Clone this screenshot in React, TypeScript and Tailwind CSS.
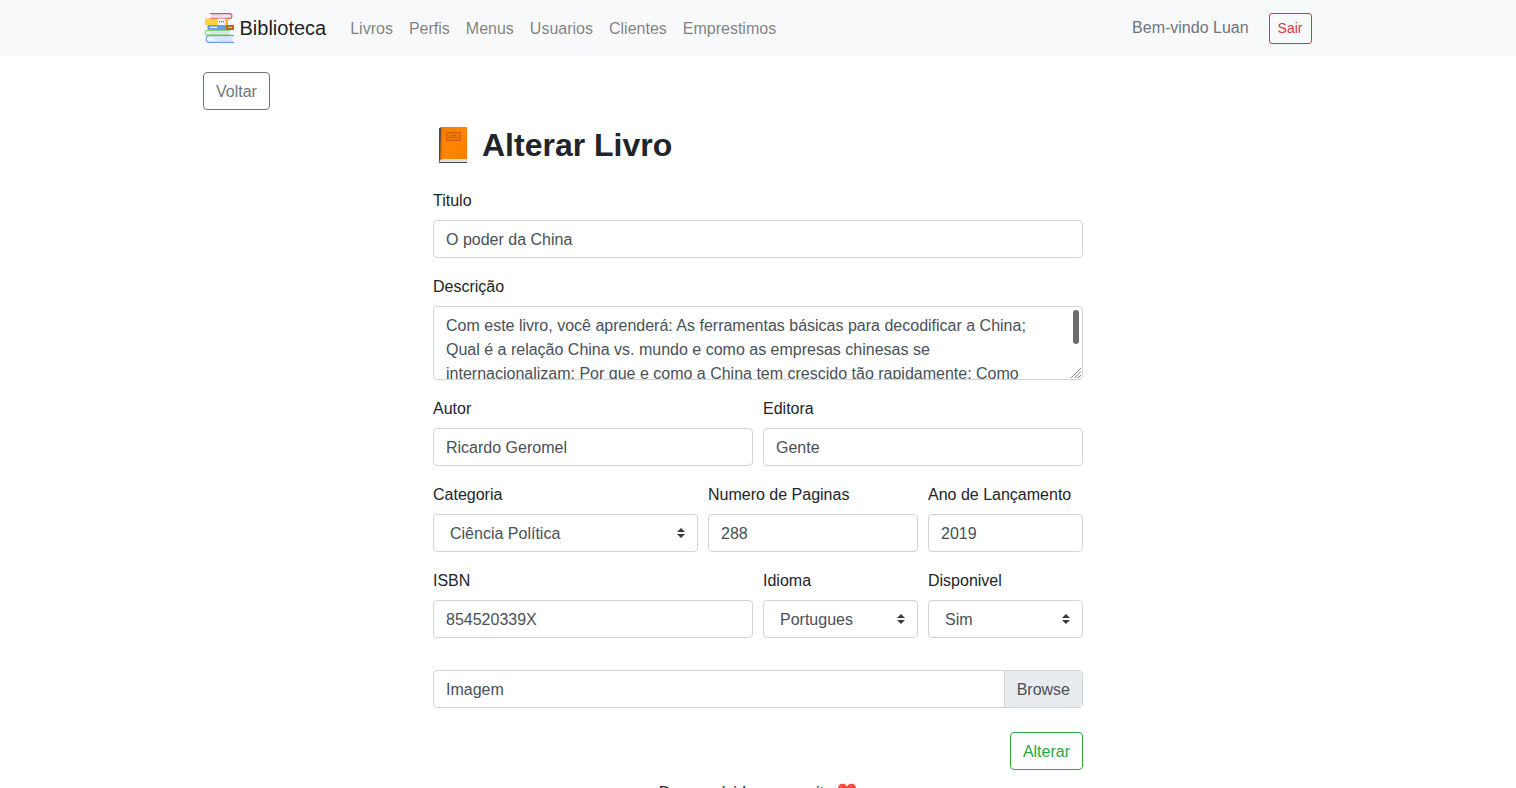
import { useState } from 'react';
import type { ReactNode, UIEvent } from 'react';

const links = ['Livros', 'Perfis', 'Menus', 'Usuarios', 'Clientes', 'Emprestimos'];

const control =
  'block h-[38px] w-full rounded border border-[#ced4da] bg-white px-3 pt-[7px] pb-[5px] text-base text-[#495057]';

const description =
  'Com este livro, você aprenderá: As ferramentas básicas para decodificar a China; Qual é a relação China vs. mundo e como as empresas chinesas se internacionalizam; Por que e como a China tem crescido tão rapidamente; Como aproveitar as oportunidades de negócios com os chineses; Quais são os avanços em tecnologia e inovação.';

function BooksLogo() {
  return (
    <svg viewBox="0 0 30 30" className="h-[30px] w-[30px]" fill="none" aria-hidden="true">
      <path d="M7 1h19v3.800H7z" fill="#e4eaf8" />
      <path d="M6 .6h19.500a2.400 2.400 0 0 1 0 4.800H6" stroke="#f3455f" strokeWidth="1.100" />
      <path d="M8 2.700h10" stroke="#c3d0ea" strokeWidth=".8" />
      <path d="M1 5.600h23V12H1z" fill="#ffd53e" />
      <path d="M22 5.600h2V12h-2z" fill="#f6b72c" />
      <path d="M14 5.600h7V12h-7z" fill="#f2f5fc" />
      <path d="M15 8.600h1m1 0h1m1 0h1" stroke="#59647c" strokeWidth="1.200" />
      <path d="M3.500 12H22v5H3.500z" fill="#6c9cf8" />
      <path d="M6 14.400h7" stroke="#fff" strokeWidth="1.300" />
      <path d="M22 12h8v5h-8z" fill="#b9622c" />
      <path d="M24 14.400h4" stroke="#f2cba8" strokeWidth="1" />
      <path d="M3 17.500h23v4H3z" fill="#e4eaf6" />
      <path d="M26 17.500H2.800a2.200 2.200 0 0 0 0 4.300H26" stroke="#83d66c" strokeWidth="1.200" />
      <path d="M7 19.700h17" stroke="#cbd6ed" strokeWidth=".8" />
      <path d="M5 23h24v6H5z" fill="#eaf1fc" />
      <path d="M30 22.700H5.500a3.350 3.350 0 0 0 0 6.700H30" stroke="#6c9cf8" strokeWidth="1.200" />
      <path d="M10 25.200h18m-14 2h14" stroke="#c3d0ea" strokeWidth=".8" />
    </svg>
  );
}

function OrangeBook() {
  return (
    <svg viewBox="0 0 40 38" className="h-[38px] w-10" fill="none" aria-hidden="true">
      <defs>
        <linearGradient id="cover" x1="0" y1="0" x2="1" y2="1">
          <stop offset="0" stopColor="#f57c00" />
          <stop offset=".5" stopColor="#ff8500" />
          <stop offset="1" stopColor="#f57c00" />
        </linearGradient>
      </defs>
      <path d="M6 2.500 8 1v31l-2 5z" fill="#424b50" />
      <path d="M6.500 36.500 9 32.500h25v4z" fill="#dfe2e4" />
      <path d="M6 36h28v1H6z" fill="#424b50" />
      <path d="M8 1h26v32H9l-1.500 1.500z" fill="url(#cover)" />
      <path d="M8 1h1v32l-1.500 1.500z" fill="#e56a00" />
      <path d="M13.500 6.500h14v8h-14z" fill="#f07800" stroke="#d05e00" strokeWidth="1" />
      <path d="M18 9.500h5m-7 2h9" stroke="#d05e00" strokeWidth="1" />
    </svg>
  );
}

function Heart() {
  return (
    <svg viewBox="0 0 20 18" className="inline-block h-[18px] w-5 align-[-3px]" aria-hidden="true">
      <path
        d="M10 17.500C6 14.500 1 10.500 1 5.500 1 2.500 3 .8 5.500.8c2 0 3.700 1.200 4.500 3C10.800 2 12.500.8 14.500.8 17 .8 19 2.500 19 5.500c0 5-5 9-9 12z"
        fill="#f44336"
      />
      <path d="M3 5c.2-1.500 1.200-2.500 2.700-2.600M12.500 4c.5-.9 1.200-1.400 2.200-1.500" stroke="#ff7b70" fill="none" />
    </svg>
  );
}

function Field({ id, label, span, children }: { id: string; label: string; span: string; children: ReactNode }) {
  return (
    <div className={span}>
      <label htmlFor={id} className="mb-1.5 block leading-[26px]">
        {label}
      </label>
      {children}
    </div>
  );
}

function Select({ id, options }: { id: string; options: string[] }) {
  return (
    <div className="relative">
      <select id={id} className={`${control} appearance-none pl-4 pr-7`}>
        {options.map((option) => (
          <option key={option}>{option}</option>
        ))}
      </select>
      <svg
        viewBox="0 0 4 5"
        className="pointer-events-none absolute right-[13px] top-3.5 h-2.5 w-2"
        aria-hidden="true"
      >
        <path fill="#343a40" d="M2 0 0 2h4zm0 5L0 3h4z" />
      </svg>
    </div>
  );
}

function TextArea({ id, value }: { id: string; value: string }) {
  const [progress, setProgress] = useState(0);
  const onScroll = (event: UIEvent<HTMLTextAreaElement>) => {
    const { scrollTop, scrollHeight, clientHeight } = event.currentTarget;
    setProgress(scrollTop / Math.max(1, scrollHeight - clientHeight));
  };

  return (
    <div className="relative">
      <textarea
        id={id}
        defaultValue={value}
        onScroll={onScroll}
        className="block h-[74px] w-full resize-none rounded border border-[#ced4da] pt-[7px] pr-7 pb-[5px] pl-3 text-base text-[#495057] [scrollbar-width:none]"
      />
      <div
        className="pointer-events-none absolute top-1 right-1 h-[34px] w-1.5 rounded-full bg-[#6b6b6b]"
        style={{ transform: `translateY(${progress * 20}px)` }}
      />
      <svg
        viewBox="0 0 10 10"
        className="pointer-events-none absolute right-0.5 bottom-0.5 h-2.5 w-2.5"
        stroke="#808080"
        aria-hidden="true"
      >
        <path d="M0 10 10 0M3.500 10 10 3.500M7 10l3-3" />
      </svg>
    </div>
  );
}

export default function App() {
  const [fileName, setFileName] = useState('Imagem');

  return (
    <div className="bg-white font-['Liberation_Sans',Arial,sans-serif] text-base text-[#212529]">
      <nav className="bg-[#f8f9fa] px-4">
        <div className="mx-auto flex h-14 max-w-[1109px] items-center">
          <a href="#" className="mr-4 flex items-center gap-1.5 text-xl text-black/90">
            <BooksLogo />
            Biblioteca
          </a>
          <ul className="flex">
            {links.map((link) => (
              <li key={link}>
                <a href="#" className="block px-2 pt-2.5 pb-2 text-black/50">
                  {link}
                </a>
              </li>
            ))}
          </ul>
          <span className="mr-5 ml-auto text-[#6c757d]">Bem-vindo Luan</span>
          <button type="button" className="mr-px rounded-[3px] border border-[#dc3545] px-2 py-1 text-sm leading-[21px] text-[#dc3545]">
            Sair
          </button>
        </div>
      </nav>

      <main className="px-4 pt-4">
        <div className="mx-auto max-w-[1110px]">
          <button type="button" className="h-[38px] rounded border border-[#6c757d] px-3 pt-0.5 text-[#6c757d]">
            Voltar
          </button>
          <form className="mx-auto mt-4 max-w-[650px]" onSubmit={(event) => event.preventDefault()}>
            <h1 className="mb-6 flex items-center gap-[9px] text-[32px] leading-[38px] font-bold">
              <OrangeBook />
              Alterar Livro
            </h1>
            <div className="grid grid-cols-12 gap-x-2.5 gap-y-4">
              <Field id="titulo" label="Titulo" span="col-span-12">
                <input id="titulo" type="text" defaultValue="O poder da China" className={control} />
              </Field>
              <Field id="descricao" label="Descrição" span="col-span-12">
                <TextArea id="descricao" value={description} />
              </Field>
              <Field id="autor" label="Autor" span="col-span-6">
                <input id="autor" type="text" defaultValue="Ricardo Geromel" className={control} />
              </Field>
              <Field id="editora" label="Editora" span="col-span-6">
                <input id="editora" type="text" defaultValue="Gente" className={control} />
              </Field>
              <Field id="categoria" label="Categoria" span="col-span-5">
                <Select id="categoria" options={['Ciência Política']} />
              </Field>
              <Field id="paginas" label="Numero de Paginas" span="col-span-4">
                <input id="paginas" type="text" defaultValue="288" className={control} />
              </Field>
              <Field id="ano" label="Ano de Lançamento" span="col-span-3">
                <input id="ano" type="text" defaultValue="2019" className={control} />
              </Field>
              <Field id="isbn" label="ISBN" span="col-span-6">
                <input id="isbn" type="text" defaultValue="854520339X" className={control} />
              </Field>
              <Field id="idioma" label="Idioma" span="col-span-3">
                <Select id="idioma" options={['Portugues']} />
              </Field>
              <Field id="disponivel" label="Disponivel" span="col-span-3">
                <Select id="disponivel" options={['Sim']} />
              </Field>
            </div>
            <label
              htmlFor="imagem"
              className="relative mt-8 flex h-[38px] cursor-pointer overflow-hidden rounded border border-[#ced4da] text-[#495057]"
            >
              <span className="flex-1 px-3 pt-[7px]">{fileName}</span>
              <span className="border-l border-[#ced4da] bg-[#e9ecef] px-3 pt-[7px]">Browse</span>
              <input
                id="imagem"
                type="file"
                className="sr-only"
                onChange={(event) => setFileName(event.target.files?.[0]?.name ?? 'Imagem')}
              />
            </label>
            <div className="mt-6 flex justify-end">
              <button type="submit" className="h-[38px] rounded border border-[#28a745] px-3 pt-0.5 text-[#28a745]">
                Alterar
              </button>
            </div>
          </form>
        </div>
      </main>

      <footer className="pt-[11px] text-center">
        Desenvolvido com muito <Heart />
      </footer>
    </div>
  );
}
